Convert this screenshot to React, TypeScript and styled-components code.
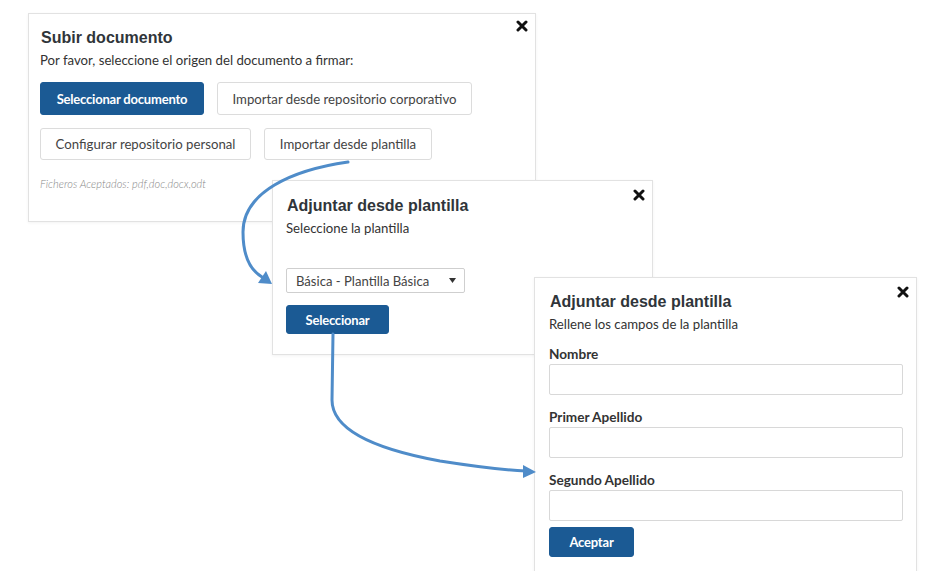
import React from "react";
import styled, { createGlobalStyle } from "styled-components";

const Global = createGlobalStyle`
  html, body { margin: 0; padding: 0; background: #ffffff; }
  body { font-family: "Lato", "Open Sans", sans-serif; color: #333; }
  * { box-sizing: border-box; }
`;

const Canvas = styled.div`
  position: relative;
  width: 936px;
  height: 571px;
  overflow: hidden;
  background: #ffffff;
`;

const Dialog = styled.section<{ $x: number; $y: number; $w: number; $h: number; $pt: number; $pl: number }>`
  position: absolute;
  left: ${(p) => p.$x}px;
  top: ${(p) => p.$y}px;
  width: ${(p) => p.$w}px;
  height: ${(p) => p.$h}px;
  padding: ${(p) => p.$pt}px 13px 0 ${(p) => p.$pl}px;
  background: #ffffff;
  border: 1px solid #e2e2e2;
  box-shadow: 0 1px 3px rgba(0, 0, 0, 0.05);
  display: flex;
  flex-direction: column;
  align-items: flex-start;
`;

const Close = styled.button<{ $top: number; $right: number }>`
  position: absolute;
  top: ${(p) => p.$top}px;
  right: ${(p) => p.$right}px;
  width: 12px;
  height: 12px;
  padding: 0;
  border: 0;
  background: transparent;
  display: flex;
  align-items: center;
  justify-content: center;
`;

const Title = styled.h2`
  margin: 0 0 0 1px;
  font-family: "Liberation Sans", Arial, sans-serif;
  font-weight: 700;
  font-size: 16px;
  line-height: 20px;
  color: #30353a;
`;

const Subtitle = styled.p`
  margin: 4px 0 0;
  font-size: 13.2px;
  line-height: 16px;
  color: #333;
`;

const ButtonGrid = styled.div`
  margin-top: 14px;
  display: flex;
  flex-direction: column;
  gap: 13px;
`;

const ButtonRow = styled.div`
  display: flex;
  gap: 13px;
`;

const Btn = styled.button<{ $primary?: boolean; $w: number; $h: number }>`
  width: ${(p) => p.$w}px;
  height: ${(p) => p.$h}px;
  padding: 0;
  font-family: "Lato", "Open Sans", sans-serif;
  font-size: ${(p) => (p.$primary ? "13px" : "13.2px")};
  border-radius: 3px;
  border: 1px solid ${(p) => (p.$primary ? "#1b5a94" : "#dcdcdc")};
  background: ${(p) => (p.$primary ? "#1b5a94" : "#ffffff")};
  color: ${(p) => (p.$primary ? "#ffffff" : "#444")};
  font-weight: ${(p) => (p.$primary ? 700 : 400)};
  letter-spacing: ${(p) => (p.$primary ? "-0.2px" : "0")};
  display: flex;
  align-items: center;
  justify-content: center;
`;

const Note = styled.p`
  margin: 17px 0 0;
  font-size: 11px;
  line-height: 14px;
  font-style: italic;
  font-weight: 300;
  color: #888;
`;

const SelectBox = styled.div`
  margin-top: 32px;
  width: 179px;
  height: 25px;
  border: 1px solid #cfcfcf;
  border-radius: 2px;
  padding: 0 8px 0 9px;
  display: flex;
  align-items: center;
  justify-content: space-between;
  font-size: 13.1px;
  color: #444;
`;

const Spacer = styled.div<{ $h: number }>`
  height: ${(p) => p.$h}px;
`;

const Field = styled.div`
  margin-top: 14px;
  display: flex;
  flex-direction: column;
  gap: 2px;
  width: 354px;
`;

const Label = styled.label`
  font-size: 13.6px;
  line-height: 16px;
  font-weight: 700;
  color: #333;
`;

const Input = styled.input`
  width: 354px;
  height: 31px;
  border: 1px solid #d8d8d8;
  border-radius: 2px;
  background: #fff;
  font-family: inherit;
  font-size: 12px;
`;

const Arrows = styled.svg`
  position: absolute;
  left: 0;
  top: 0;
  width: 936px;
  height: 571px;
  pointer-events: none;
`;

const XIcon = () => (
  <svg width="12" height="12" viewBox="0 0 12 12">
    <path d="M2 2 L10 10 M10 2 L2 10" stroke="#111" strokeWidth="3" strokeLinecap="round" />
  </svg>
);

const Caret = () => (
  <svg width="7" height="5" viewBox="0 0 7 5">
    <path d="M0 0 H7 L3.5 5 Z" fill="#333" />
  </svg>
);

export default function App() {
  return (
    <>
      <Global />
      <Canvas>
        <Dialog $x={28} $y={13} $w={508} $h={209} $pt={14} $pl={11}>
          <Close $top={6} $right={7} aria-label="Cerrar"><XIcon /></Close>
          <Title>Subir documento</Title>
          <Subtitle>Por favor, seleccione el origen del documento a firmar:</Subtitle>
          <ButtonGrid>
            <ButtonRow>
              <Btn $primary $w={164} $h={33}>Seleccionar documento</Btn>
              <Btn $w={255} $h={33}>Importar desde repositorio corporativo</Btn>
            </ButtonRow>
            <ButtonRow>
              <Btn $w={211} $h={32}>Configurar repositorio personal</Btn>
              <Btn $w={168} $h={32}>Importar desde plantilla</Btn>
            </ButtonRow>
          </ButtonGrid>
          <Note>Ficheros Aceptados: pdf,doc,docx,odt</Note>
        </Dialog>

        <Dialog $x={272} $y={180} $w={381} $h={175} $pt={15} $pl={13}>
          <Close $top={8} $right={7} aria-label="Cerrar"><XIcon /></Close>
          <Title>Adjuntar desde plantilla</Title>
          <Subtitle>Seleccione la plantilla</Subtitle>
          <SelectBox>
            <span>Básica - Plantilla Básica</span>
            <Caret />
          </SelectBox>
          <Spacer $h={12} />
          <Btn $primary $w={103} $h={29}>Seleccionar</Btn>
        </Dialog>

        <Dialog $x={534} $y={277} $w={383} $h={310} $pt={14} $pl={14}>
          <Close $top={8} $right={7} aria-label="Cerrar"><XIcon /></Close>
          <Title>Adjuntar desde plantilla</Title>
          <Subtitle>Rellene los campos de la plantilla</Subtitle>
          <Field>
            <Label>Nombre</Label>
            <Input />
          </Field>
          <Field>
            <Label>Primer Apellido</Label>
            <Input />
          </Field>
          <Field>
            <Label>Segundo Apellido</Label>
            <Input />
          </Field>
          <Spacer $h={6} />
          <Btn $primary $w={85} $h={30}>Aceptar</Btn>
        </Dialog>

        <Arrows viewBox="0 0 936 571">
          <path
            d="M348 162 C 292 170, 243 192, 243 232 C 243 256, 250 270, 262 277"
            fill="none"
            stroke="#4f8cc9"
            strokeWidth="3"
            strokeLinecap="round"
          />
          <path d="M272 284 L 258 283 L 266 271 Z" fill="#4f8cc9" />
          <path
            d="M333 334 L 332 400 C 332 432, 380 450, 440 461 C 478 467, 505 470, 526 471"
            fill="none"
            stroke="#4f8cc9"
            strokeWidth="3"
            strokeLinecap="round"
          />
          <path d="M536 472 L 523 465 L 523 478 Z" fill="#4f8cc9" />
        </Arrows>
      </Canvas>
    </>
  );
}
